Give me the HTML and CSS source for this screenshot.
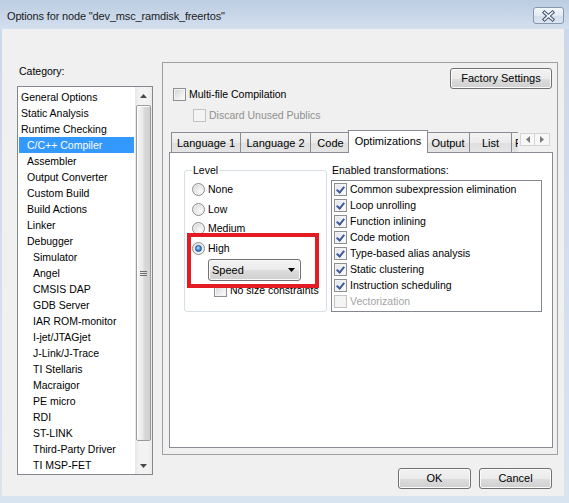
FILE: index.html
```html
<!DOCTYPE html>
<html>
<head>
<meta charset="utf-8">
<title>Options</title>
<link rel="stylesheet" href="styles.css">
</head>
<body>
<div class="window">
  <div class="titlebar">
    <span class="title">Options for node "dev_msc_ramdisk_freertos"</span>
    <div class="close">
      <svg width="15" height="12" viewBox="0 0 15 12">
        <path d="M3.5 2.5 L11.5 9.5 M11.5 2.5 L3.5 9.5" stroke="#3f516b" stroke-width="3.6" stroke-linecap="square" fill="none"/>
        <path d="M3.5 2.5 L11.5 9.5 M11.5 2.5 L3.5 9.5" stroke="#f4f7fb" stroke-width="1.6" stroke-linecap="square" fill="none"/>
      </svg>
    </div>
  </div>
  <div class="client">
    <div class="main">
      <div class="left">
        <div class="cat-label">Category:</div>
        <div class="listbox">
          <ul class="items">
            <li class="l1">General Options</li>
            <li class="l1">Static Analysis</li>
            <li class="l1">Runtime Checking</li>
            <li class="l2 selected">C/C++ Compiler</li>
            <li class="l2">Assembler</li>
            <li class="l2">Output Converter</li>
            <li class="l2">Custom Build</li>
            <li class="l2">Build Actions</li>
            <li class="l2">Linker</li>
            <li class="l2">Debugger</li>
            <li class="l3">Simulator</li>
            <li class="l3">Angel</li>
            <li class="l3">CMSIS DAP</li>
            <li class="l3">GDB Server</li>
            <li class="l3">IAR ROM-monitor</li>
            <li class="l3">I-jet/JTAGjet</li>
            <li class="l3">J-Link/J-Trace</li>
            <li class="l3">TI Stellaris</li>
            <li class="l3">Macraigor</li>
            <li class="l3">PE micro</li>
            <li class="l3">RDI</li>
            <li class="l3">ST-LINK</li>
            <li class="l3">Third-Party Driver</li>
            <li class="l3">TI MSP-FET</li>
          </ul>
          <div class="vscroll">
            <div class="sb-btn">
              <svg width="7" height="4" viewBox="0 0 7 4"><polygon points="0,4 3.5,0 7,4" fill="#4a4a4a"/></svg>
            </div>
            <div class="sb-thumb">
              <svg width="7" height="7" viewBox="0 0 7 7">
                <path d="M0 1.5 H7 M0 3.5 H7 M0 5.5 H7" stroke="#6f6f6f" stroke-width="1"/>
              </svg>
            </div>
            <div class="sb-space"></div>
            <div class="sb-btn">
              <svg width="7" height="4" viewBox="0 0 7 4"><polygon points="0,0 7,0 3.5,4" fill="#4a4a4a"/></svg>
            </div>
          </div>
        </div>
      </div>

      <div class="right">
        <div class="panel">
          <div class="panel-top">
            <div class="opts">
              <div class="chk-row"><span class="cb"></span><span>Multi-file Compilation</span></div>
              <div class="chk-row sub disabled"><span class="cb dis"></span><span>Discard Unused Publics</span></div>
            </div>
            <div class="btn factory">Factory Settings</div>
          </div>

          <div class="tabstrip">
            <div class="tab-clip">
              <div class="tab t1">Language 1</div>
              <div class="tab t2">Language 2</div>
              <div class="tab t3">Code</div>
              <div class="tab t4 sel">Optimizations</div>
              <div class="tab t5">Output</div>
              <div class="tab t6">List</div>
              <div class="tab t7">P</div>
            </div>
            <div class="tab-scroll">
              <span class="ts-btn"><svg width="4" height="7" viewBox="0 0 4 7"><polygon points="4,0 4,7 0,3.5" fill="#7a7a7a"/></svg></span>
              <span class="ts-btn"><svg width="4" height="7" viewBox="0 0 4 7"><polygon points="0,0 4,3.5 0,7" fill="#7a7a7a"/></svg></span>
            </div>
          </div>

          <div class="page">
            <fieldset class="level">
              <legend>Level</legend>
              <div class="radio-row first"><span class="rb"></span><span>None</span></div>
              <div class="radio-row"><span class="rb"></span><span>Low</span></div>
              <div class="radio-row"><span class="rb"></span><span>Medium</span></div>
              <div class="radio-row"><span class="rb on"></span><span>High</span></div>
              <div class="combo">
                <span>Speed</span>
                <svg width="7" height="4" viewBox="0 0 7 4"><polygon points="0,0 7,0 3.5,4" fill="#000"/></svg>
              </div>
              <div class="chk-row nsc"><span class="cb"></span><span>No size constraints</span></div>
            </fieldset>

            <div class="trans">
              <div class="trans-label">Enabled transformations:</div>
              <div class="trans-list">
                <div class="trow"><span class="cb on"></span><span>Common subexpression elimination</span></div>
                <div class="trow"><span class="cb on"></span><span>Loop unrolling</span></div>
                <div class="trow"><span class="cb on"></span><span>Function inlining</span></div>
                <div class="trow"><span class="cb on"></span><span>Code motion</span></div>
                <div class="trow"><span class="cb on"></span><span>Type-based alias analysis</span></div>
                <div class="trow"><span class="cb on"></span><span>Static clustering</span></div>
                <div class="trow"><span class="cb on"></span><span>Instruction scheduling</span></div>
                <div class="trow disabled"><span class="cb dis"></span><span>Vectorization</span></div>
              </div>
            </div>

            <div class="highlight-box"></div>
          </div>
        </div>

        <div class="buttons">
          <div class="btn dlg">OK</div>
          <div class="btn dlg">Cancel</div>
        </div>
      </div>
    </div>
  </div>
</div>
</body>
</html>
```

FILE: styles.css
```css
html, body {
  margin: 0;
  padding: 0;
}
body {
  font-family: "Liberation Sans", Arial, sans-serif;
  font-size: 10.5px;
  line-height: 13px;
  color: #000;
  background: #d4e0ee;
}
.window {
  width: 569px;
  height: 503px;
  display: flex;
  flex-direction: column;
  overflow: hidden;
  background: linear-gradient(#c9d8ea, #d9e4f1);
}

/* title bar */
.titlebar {
  height: 29px;
  flex: none;
  display: flex;
  align-items: flex-start;
  justify-content: space-between;
  padding: 0 5px 0 7px;
  box-sizing: border-box;
  background: linear-gradient(#bccde2, #d3dfee);
}
.title {
  font-size: 11px;
  letter-spacing: -0.15px;
  line-height: 15px;
  margin-top: 9px;
  color: #1b1b1b;
}
.close {
  width: 31px;
  height: 17px;
  margin-top: 7px;
  box-sizing: border-box;
  border: 1px solid #8497b0;
  border-radius: 3px;
  background: linear-gradient(#f6f8fb, #e3eaf3 50%, #d5dfeb 51%, #dbe4ef);
  display: flex;
  align-items: center;
  justify-content: center;
}

/* client area */
.client {
  flex: 1;
  margin: 0 5px 7px 2px;
  background: #f0f0f0;
  display: flex;
  flex-direction: column;
}
.main {
  display: flex;
  align-items: flex-start;
  padding-top: 33px;
}

/* category list */
.left {
  width: 136px;
  margin-left: 15px;
  padding-top: 3px;
  flex: none;
}
.cat-label {
  padding-left: 2px;
  height: 13px;
}
.listbox {
  margin-top: 8px;
  height: 389px;
  box-sizing: border-box;
  border: 1px solid #828790;
  background: #fff;
  display: flex;
}
.items {
  list-style: none;
  margin: 0;
  padding: 2px 1px 0 1px;
  flex: 1;
  min-width: 0;
}
.items li {
  height: 16px;
  line-height: 16px;
  white-space: nowrap;
}
.items .l1 { padding-left: 2px; }
.items .l2 { padding-left: 8px; }
.items .l3 { padding-left: 14px; }
.items .selected {
  background: #3399ff;
  color: #fff;
}
.vscroll {
  width: 17px;
  flex: none;
  display: flex;
  flex-direction: column;
  background: linear-gradient(to right, #e7e7e7, #f3f3f3 25%, #f3f3f3 75%, #ebebeb);
}
.sb-btn {
  height: 17px;
  flex: none;
  display: flex;
  align-items: center;
  justify-content: center;
}
.sb-thumb {
  margin: 1px 1px 0 1px;
  height: 336px;
  flex: none;
  box-sizing: border-box;
  border: 1px solid #9b9b9b;
  border-radius: 2px;
  background: linear-gradient(to right, #f6f6f6, #e9e9e9 45%, #dadada 55%, #d0d0d0);
  box-shadow: inset 1px 1px 0 #fff;
  display: flex;
  align-items: center;
  justify-content: center;
}
.sb-space { flex: 1; }

/* right column */
.right {
  margin-left: 9px;
  width: 396px;
  flex: none;
  display: flex;
  flex-direction: column;
}
.panel {
  height: 393px;
  flex: none;
  box-sizing: border-box;
  border: 1px solid #a0a0a0;
  display: flex;
  flex-direction: column;
}
.panel-top {
  display: flex;
  justify-content: space-between;
  align-items: flex-start;
  padding: 5px 5px 0 10px;
}
.opts {
  margin-top: 20px;
}
.chk-row {
  display: flex;
  align-items: center;
  height: 13px;
  gap: 3px;
  white-space: nowrap;
}
.chk-row.sub {
  margin-top: 8px;
  margin-left: 20px;
}
.disabled { color: #8f8f8f; }

/* checkboxes */
.cb {
  width: 13px;
  height: 13px;
  flex: none;
  box-sizing: border-box;
  border: 1px solid #8e8f8f;
  background: linear-gradient(135deg, #cdd1d6, #f7f7f7 80%);
  box-shadow: inset 0 0 0 1px #f4f4f4;
  display: inline-block;
  position: relative;
}
.cb.on {
  background: linear-gradient(135deg, #dfe3e8, #fbfbfb 80%);
}
.cb.on::after {
  content: "";
  position: absolute;
  left: 3px;
  top: 1px;
  width: 3px;
  height: 6px;
  border: solid #3f5a9e;
  border-width: 0 2px 2px 0;
  transform: rotate(40deg);
}
.cb.dis {
  border-color: #c3c3c3;
  background: #f4f4f4;
  box-shadow: none;
}

/* buttons */
.btn {
  box-sizing: border-box;
  height: 21px;
  border: 1px solid #707070;
  border-radius: 3px;
  background: linear-gradient(#f2f2f2, #ebebeb 50%, #dddddd 51%, #cfcfcf);
  box-shadow: inset 0 0 0 1px #fbfbfb;
  display: flex;
  align-items: center;
  justify-content: center;
  white-space: nowrap;
  flex: none;
  font-size: 11px;
}
.factory { width: 102px; }
.dlg { width: 73px; }

/* tabs */
.tabstrip {
  margin: 8px 4px 0 6px;
  height: 23px;
  display: flex;
  position: relative;
  z-index: 1;
  flex: none;
}
.tab-clip {
  width: 349px;
  flex: none;
  display: flex;
  align-items: flex-start;
  overflow: hidden;
  padding-left: 2px;
  box-sizing: border-box;
}
.tab {
  flex: none;
  height: 20px;
  margin-top: 2px;
  box-sizing: border-box;
  border: 1px solid #898c95;
  border-bottom: none;
  background: linear-gradient(#f3f3f3, #ebebeb 50%, #dedede 51%, #e5e5e5);
  display: flex;
  align-items: center;
  justify-content: center;
  white-space: nowrap;
  padding-top: 1px;
  font-size: 11px;
}
.tab.sel {
  height: 23px;
  margin-top: 0;
  background: #fff;
  position: relative;
  z-index: 2;
  padding-top: 0;
  padding-bottom: 2px;
}
.t1 { width: 70px; }
.t2 { width: 71px; margin-left: -1px; }
.t3 { width: 41px; margin-left: -1px; }
.t4 { width: 80px; margin-left: -3px; }
.t5 { width: 44px; margin-left: -2px; }
.t6 { width: 43px; margin-left: -1px; }
.t7 { width: 20px; margin-left: -1px; justify-content: flex-start; padding-left: 3px; }
.tab-scroll {
  flex: 1;
  display: flex;
  align-items: flex-start;
  padding: 3px 0 0 2px;
}
.ts-btn {
  width: 15px;
  height: 13px;
  box-sizing: border-box;
  border: 1px solid #d4d4d4;
  background: #f7f7f7;
  display: flex;
  align-items: center;
  justify-content: center;
}
.ts-btn + .ts-btn { border-left: none; }

/* tab page */
.page {
  position: relative;
  margin: -1px 4px 0 6px;
  width: 384px;
  height: 296px;
  flex: none;
  box-sizing: border-box;
  border: 1px solid #898c95;
  background: #fff;
  display: flex;
  align-items: flex-start;
  padding: 11px 0 0 14px;
}
.level {
  margin: 0;
  padding: 0 0 0 7px;
  width: 143px;
  height: 148px;
  min-width: 0;
  box-sizing: border-box;
  border: 1px solid #d5dfe5;
  border-radius: 3px;
  flex: none;
}
.level legend {
  padding: 0 1px;
  line-height: 13px;
  margin-left: 0;
}
.radio-row {
  display: flex;
  align-items: center;
  height: 13px;
  gap: 3px;
  margin-top: 6.5px;
}
.radio-row.first { margin-top: 6px; }
.rb {
  width: 13px;
  height: 13px;
  flex: none;
  box-sizing: border-box;
  border-radius: 50%;
  border: 1px solid #8c8c8c;
  background: radial-gradient(circle at 65% 65%, #fbfbfb, #dcdcdc 70%, #c9c9c9);
  box-shadow: inset 0 0 0 1px #f2f2f2;
  position: relative;
}
.rb.on::after {
  content: "";
  position: absolute;
  left: 2px;
  top: 2px;
  width: 7px;
  height: 7px;
  box-sizing: border-box;
  border-radius: 50%;
  border: 1px solid #1d4f8c;
  background: radial-gradient(circle at 40% 35%, #b7e1ff, #3d8ad9 55%, #1c5aa6);
}
.combo {
  margin: 4.5px 0 0 16px;
  width: 93px;
  height: 22px;
  box-sizing: border-box;
  border: 1px solid #707070;
  border-radius: 3px;
  background: linear-gradient(#f2f2f2, #ebebeb 50%, #dddddd 51%, #cfcfcf);
  box-shadow: inset 0 0 0 1px #fbfbfb;
  display: flex;
  align-items: center;
  justify-content: space-between;
  padding: 0 5px 0 3px;
  font-size: 11px;
}
.chk-row.nsc {
  margin: 3px 0 0 22px;
}

.trans {
  margin-left: 4px;
  flex: none;
}
.trans-label {
  line-height: 13px;
  padding-left: 1px;
}
.trans-list {
  margin-top: 3px;
  width: 211px;
  height: 132px;
  box-sizing: border-box;
  border: 1px solid #828790;
  background: #fff;
}
.trow {
  height: 16px;
  display: flex;
  align-items: center;
  gap: 3px;
  padding-left: 2px;
  white-space: nowrap;
}
.trow.disabled { color: #a3a3a3; }

/* red annotation frame */
.highlight-box {
  position: absolute;
  left: 17px;
  top: 80px;
  width: 132px;
  height: 55px;
  box-sizing: border-box;
  border: 4px solid #e31c23;
}

/* bottom buttons */
.buttons {
  display: flex;
  justify-content: flex-end;
  gap: 8px;
  margin-top: 13px;
  padding-right: 6px;
}
```
